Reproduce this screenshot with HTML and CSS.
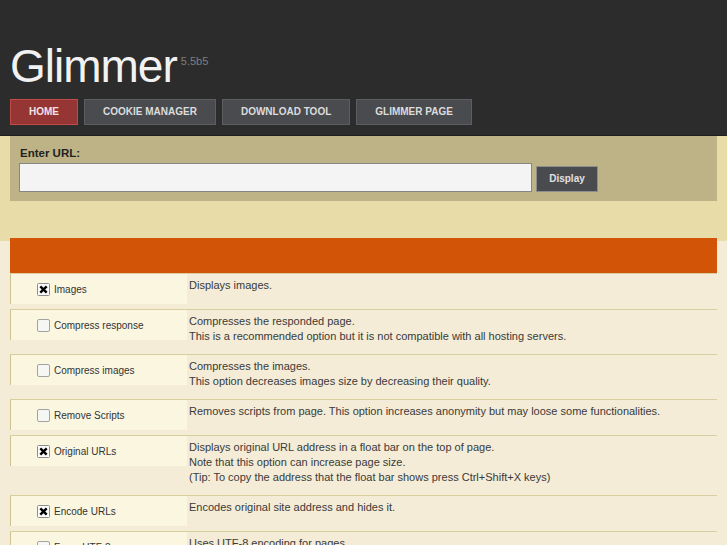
FILE: index.html
```html
<!DOCTYPE html>
<html>
<head>
<meta charset="utf-8">
<title>Glimmer</title>
<link rel="stylesheet" href="styles.css">
</head>
<body>
<header class="header">
  <h1 class="logo">Glimmer<span class="version">5.5b5</span></h1>
  <nav class="nav">
    <a class="nav-btn active">HOME</a>
    <a class="nav-btn">COOKIE MANAGER</a>
    <a class="nav-btn">DOWNLOAD TOOL</a>
    <a class="nav-btn">GLIMMER PAGE</a>
  </nav>
</header>
<section class="top-area">
  <div class="url-box">
    <div class="url-label">Enter URL:</div>
    <div class="url-row">
      <div class="url-input"></div>
      <div class="display-btn">Display</div>
    </div>
  </div>
</section>
<section class="content">
  <div class="options-head"></div>
  <div class="row">
    <div class="opt"><svg class="cb" width="13" height="13" viewBox="0 0 13 13"><rect x="0.5" y="0.5" width="12" height="12" rx="1" fill="#fbfbfb" stroke="#8c8c8c"/><path d="M3.3 3.3 L9.7 9.7 M9.7 3.3 L3.3 9.7" stroke="#000" stroke-width="2.4"/></svg><span>Images</span></div>
    <div class="desc">Displays images.</div>
  </div>
  <div class="row">
    <div class="opt"><svg class="cb" width="13" height="13" viewBox="0 0 13 13"><rect x="0.5" y="0.5" width="12" height="12" rx="1.5" fill="#f6f6f4" stroke="#a3a3a3"/></svg><span>Compress response</span></div>
    <div class="desc">Compresses the responded page.<br>This is a recommended option but it is not compatible with all hosting servers.</div>
  </div>
  <div class="row">
    <div class="opt"><svg class="cb" width="13" height="13" viewBox="0 0 13 13"><rect x="0.5" y="0.5" width="12" height="12" rx="1.5" fill="#f6f6f4" stroke="#a3a3a3"/></svg><span>Compress images</span></div>
    <div class="desc">Compresses the images.<br>This option decreases images size by decreasing their quality.</div>
  </div>
  <div class="row">
    <div class="opt"><svg class="cb" width="13" height="13" viewBox="0 0 13 13"><rect x="0.5" y="0.5" width="12" height="12" rx="1.5" fill="#f6f6f4" stroke="#a3a3a3"/></svg><span>Remove Scripts</span></div>
    <div class="desc">Removes scripts from page. This option increases anonymity but may loose some functionalities.</div>
  </div>
  <div class="row">
    <div class="opt"><svg class="cb" width="13" height="13" viewBox="0 0 13 13"><rect x="0.5" y="0.5" width="12" height="12" rx="1" fill="#fbfbfb" stroke="#8c8c8c"/><path d="M3.3 3.3 L9.7 9.7 M9.7 3.3 L3.3 9.7" stroke="#000" stroke-width="2.4"/></svg><span>Original URLs</span></div>
    <div class="desc">Displays original URL address in a float bar on the top of page.<br>Note that this option can increase page size.<br>(Tip: To copy the address that the float bar shows press Ctrl+Shift+X keys)</div>
  </div>
  <div class="row">
    <div class="opt"><svg class="cb" width="13" height="13" viewBox="0 0 13 13"><rect x="0.5" y="0.5" width="12" height="12" rx="1" fill="#fbfbfb" stroke="#8c8c8c"/><path d="M3.3 3.3 L9.7 9.7 M9.7 3.3 L3.3 9.7" stroke="#000" stroke-width="2.4"/></svg><span>Encode URLs</span></div>
    <div class="desc">Encodes original site address and hides it.</div>
  </div>
  <div class="row">
    <div class="opt"><svg class="cb" width="13" height="13" viewBox="0 0 13 13"><rect x="0.5" y="0.5" width="12" height="12" rx="1.5" fill="#f6f6f4" stroke="#a3a3a3"/></svg><span>Force UTF-8</span></div>
    <div class="desc">Uses UTF-8 encoding for pages.</div>
  </div>
</section>
</body>
</html>
```
FILE: styles.css
```css
* { box-sizing: border-box; }
html, body { margin: 0; padding: 0; }
body {
  background: #f4ecd6;
  font-family: "Liberation Sans", Arial, sans-serif;
  color: #333;
}
.header {
  background: #2c2c2c;
  padding: 43px 10px 10px;
  border-bottom: 1px solid #1f1f1f;
}
.logo {
  margin: 0;
  height: 46px;
  font-weight: normal;
  font-size: 46px;
  line-height: 46px;
  letter-spacing: -1px;
  color: #f2f2f2;
}
.version {
  font-size: 11px;
  line-height: 0;
  letter-spacing: 0;
  color: #7e7e7e;
  margin-left: 4px;
  vertical-align: 17px;
}
.nav {
  display: flex;
  gap: 6px;
  margin-top: 10px;
}
.nav-btn {
  display: block;
  height: 26px;
  line-height: 24px;
  padding: 0 18px;
  background: #4a4b4f;
  border: 1px solid #5d5e62;
  color: #dcdcdc;
  font-size: 10px;
  font-weight: bold;
}
.nav-btn.active {
  background: #963634;
  border-color: #c04c49;
  color: #f3e2e2;
}
.top-area {
  background: #e8dca9;
  padding: 0 10px 40px;
}
.url-box {
  background: #bdb386;
  padding: 10px 9px 9px;
}
.url-label {
  font-size: 11.5px;
  font-weight: bold;
  line-height: 14px;
  color: #222;
  margin-bottom: 3px;
  padding-left: 1px;
}
.url-row {
  display: flex;
  align-items: flex-end;
  gap: 4px;
}
.url-input {
  width: 513px;
  height: 29px;
  background: #f4f4f4;
  border: 1px solid #868686;
}
.display-btn {
  width: 62px;
  height: 26px;
  line-height: 24px;
  text-align: center;
  background: #4a4b4f;
  border: 1px solid #8e8e8e;
  color: #e0e0e0;
  font-size: 10px;
  font-weight: bold;
}
.content {
  display: flow-root;
  padding: 0 10px 20px;
}
.options-head {
  margin-top: -3px;
  height: 35px;
  background: #d25406;
}
.row {
  display: flex;
  border-top: 1px solid #d8ce9f;
}
.opt {
  flex: 0 0 177px;
  height: 30px;
  margin-bottom: 5px;
  background: #faf6e0;
  border-left: 1px solid #cdc392;
  display: flex;
  align-items: center;
  padding-left: 26px;
  font-size: 10px;
  color: #333;
}
.cb { flex: 0 0 13px; margin-right: 4px; }
.desc {
  padding: 4px 0 10px 2px;
  font-size: 11px;
  line-height: 15px;
  color: #3a3a3a;
}
```
